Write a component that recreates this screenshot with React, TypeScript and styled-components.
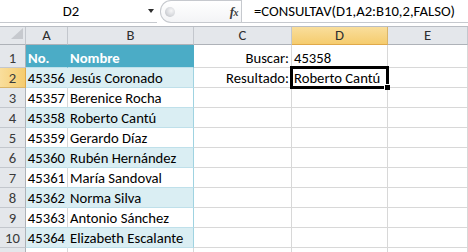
import React from "react";
import styled, { createGlobalStyle, css } from "styled-components";

const FONT = `Carlito, Calibri, Lato, "Liberation Sans", sans-serif`;

const GlobalStyle = createGlobalStyle`
  html, body { margin: 0; padding: 0; background: #ffffff; }
  body { font-family: ${FONT}; }
  * { box-sizing: border-box; }
`;

const Window = styled.div`
  width: 468px;
  height: 252px;
  overflow: hidden;
  background: #ffffff;
  display: flex;
  flex-direction: column;
  font-family: ${FONT};
  font-size: 14.67px;
  color: #000000;
`;

const FormulaBar = styled.div`
  display: flex;
  height: 23px;
  flex: none;
`;

const NameBox = styled.div`
  width: 157px;
  display: flex;
  align-items: center;
  border-bottom: 1px solid #c6c9ce;
`;

const NameValue = styled.div`
  flex: 1;
  text-align: center;
  line-height: 18px;
`;

const DropArrow = styled.div`
  width: 15px;
  padding-left: 6px;
  display: flex;
  align-items: center;
  &::before {
    content: "";
    border-left: 3.5px solid transparent;
    border-right: 3.5px solid transparent;
    border-top: 4px solid #2e2e2e;
  }
`;

const FxArea = styled.div`
  margin-left: 3px;
  width: 81px;
  display: flex;
  align-items: center;
  border: 1px solid #c6c9ce;
  border-right: none;
  border-radius: 11px 0 0 11px;
  background: linear-gradient(#ffffff, #f3f4f6);
`;

const Grip = styled.div`
  width: 10px;
  height: 10px;
  margin-left: 4px;
  border-radius: 50%;
  background: radial-gradient(circle at 62% 38%, #f6f6f7 0%, #d6d8dc 55%, #b3b6bb 100%);
`;

const Fx = styled.div`
  margin-left: auto;
  margin-right: 3px;
  font-family: "Liberation Serif", serif;
  font-style: italic;
  font-weight: bold;
  font-size: 13px;
  color: #3c3c3c;
  letter-spacing: -0.5px;
  & > span {
    font-size: 10px;
  }
`;

const FormulaInput = styled.div`
  flex: 1;
  display: flex;
  align-items: center;
  padding-left: 12px;
  border-left: 1px solid #c6c9ce;
  border-bottom: 1px solid #c6c9ce;
  line-height: 18px;
  white-space: nowrap;
`;

const Gap = styled.div`
  height: 3px;
  flex: none;
`;

const Grid = styled.div`
  display: grid;
  grid-template-columns: 26px 42px 126px 98px 96px 80px;
  grid-template-rows: 18px 23px repeat(10, 20px);
  border-top: 1px solid #b9bdc3;
`;

const headerBase = css`
  display: flex;
  align-items: flex-end;
  justify-content: center;
  line-height: 17px;
  color: #2f2f2f;
  background: #e4e7eb;
  border-right: 1px solid #c3c7cd;
  border-bottom: 1px solid #c3c7cd;
`;

const Corner = styled.div`
  ${headerBase};
  justify-content: flex-end;
  padding: 0 2px 5px 0;
  border-bottom-color: #aeb2b8;
  &::after {
    content: "";
    width: 0;
    height: 0;
    border-left: 12px solid transparent;
    border-bottom: 11px solid #c6c9ce;
  }
`;

const ColHeader = styled.div<{ $selected?: boolean }>`
  ${headerBase};
  border-bottom-color: #aeb2b8;
  ${(p) =>
    p.$selected &&
    css`
      background: linear-gradient(#f9de9c, #f5cc6e);
      border-bottom-color: #e0a94a;
      border-right-color: #d9b56a;
    `}
`;

const RowHeader = styled.div<{ $selected?: boolean }>`
  ${headerBase};
  line-height: 18px;
  border-right-color: #aeb2b8;
  color: #3a3a3a;
  ${(p) =>
    p.$selected &&
    css`
      background: linear-gradient(90deg, #f9de9c, #f5cc6e);
      border-right-color: #e0a94a;
      border-bottom-color: #d9b56a;
    `}
`;

type Kind = "head" | "band" | "row" | "plain";

const SEP = "#bfe0ea";
const GRID = "#d8d8d8";

const Cell = styled.div<{ $kind: Kind; $last?: boolean; $right?: boolean }>`
  position: relative;
  display: flex;
  align-items: flex-end;
  justify-content: ${(p) => (p.$right ? "flex-end" : "flex-start")};
  padding: 0 2px 0 2px;
  line-height: 18px;
  white-space: nowrap;
  border-right: 1px solid ${GRID};
  border-bottom: 1px solid ${GRID};
  ${(p) =>
    p.$kind === "head" &&
    css`
      background: #4bacc6;
      color: #ffffff;
      font-weight: bold;
      border-right-color: #4bacc6;
      border-bottom-color: ${SEP};
    `}
  ${(p) =>
    p.$kind === "band" &&
    css`
      background: #daeef3;
      border-right-color: ${p.$last ? "#9fd3e1" : "#daeef3"};
      border-bottom-color: ${SEP};
    `}
  ${(p) =>
    p.$kind === "row" &&
    css`
      border-right-color: ${p.$last ? "#9fd3e1" : GRID};
      border-bottom-color: ${SEP};
    `}
`;

const ActiveFrame = styled.div`
  position: absolute;
  left: -2px;
  top: -2px;
  right: -2px;
  bottom: -2px;
  border: 3px solid #000000;
  z-index: 1;
  pointer-events: none;
`;

const FillHandle = styled.div`
  position: absolute;
  right: -3px;
  bottom: -3px;
  width: 6px;
  height: 6px;
  background: #000000;
  border: 1px solid #ffffff;
  border-right: none;
  border-bottom: none;
  z-index: 2;
`;

const people: [string, string][] = [
  ["45356", "Jesús Coronado"],
  ["45357", "Berenice Rocha"],
  ["45358", "Roberto Cantú"],
  ["45359", "Gerardo Díaz"],
  ["45360", "Rubén Hernández"],
  ["45361", "María Sandoval"],
  ["45362", "Norma Silva"],
  ["45363", "Antonio Sánchez"],
  ["45364", "Elizabeth Escalante"],
];

const columns = ["A", "B", "C", "D", "E"];

export default function App() {
  const rows: React.ReactNode[] = [];

  rows.push(
    <React.Fragment key="r1">
      <RowHeader>1</RowHeader>
      <Cell $kind="head">No.</Cell>
      <Cell $kind="head" $last>
        Nombre
      </Cell>
      <Cell $kind="plain" $right>
        Buscar:
      </Cell>
      <Cell $kind="plain">45358</Cell>
      <Cell $kind="plain" />
    </React.Fragment>
  );

  people.forEach(([id, name], i) => {
    const r = i + 2;
    const kind: Kind = r % 2 === 0 ? "band" : "row";
    rows.push(
      <React.Fragment key={`r${r}`}>
        <RowHeader $selected={r === 2}>{r}</RowHeader>
        <Cell $kind={kind} $right>
          {id}
        </Cell>
        <Cell $kind={kind} $last>
          {name}
        </Cell>
        <Cell $kind="plain" $right>
          {r === 2 ? "Resultado:" : ""}
        </Cell>
        <Cell $kind="plain">
          {r === 2 ? (
            <>
              Roberto Cantú
              <ActiveFrame />
              <FillHandle />
            </>
          ) : null}
        </Cell>
        <Cell $kind="plain" />
      </React.Fragment>
    );
  });

  rows.push(
    <React.Fragment key="r11">
      <RowHeader />
      <Cell $kind="plain" />
      <Cell $kind="plain" />
      <Cell $kind="plain" />
      <Cell $kind="plain" />
      <Cell $kind="plain" />
    </React.Fragment>
  );

  return (
    <>
      <GlobalStyle />
      <Window>
        <FormulaBar>
          <NameBox>
            <NameValue>D2</NameValue>
            <DropArrow />
          </NameBox>
          <FxArea>
            <Grip />
            <Fx>
              f<span>x</span>
            </Fx>
          </FxArea>
          <FormulaInput>=CONSULTAV(D1,A2:B10,2,FALSO)</FormulaInput>
        </FormulaBar>
        <Gap />
        <Grid>
          <Corner />
          {columns.map((c) => (
            <ColHeader key={c} $selected={c === "D"}>
              {c}
            </ColHeader>
          ))}
          {rows}
        </Grid>
      </Window>
    </>
  );
}
